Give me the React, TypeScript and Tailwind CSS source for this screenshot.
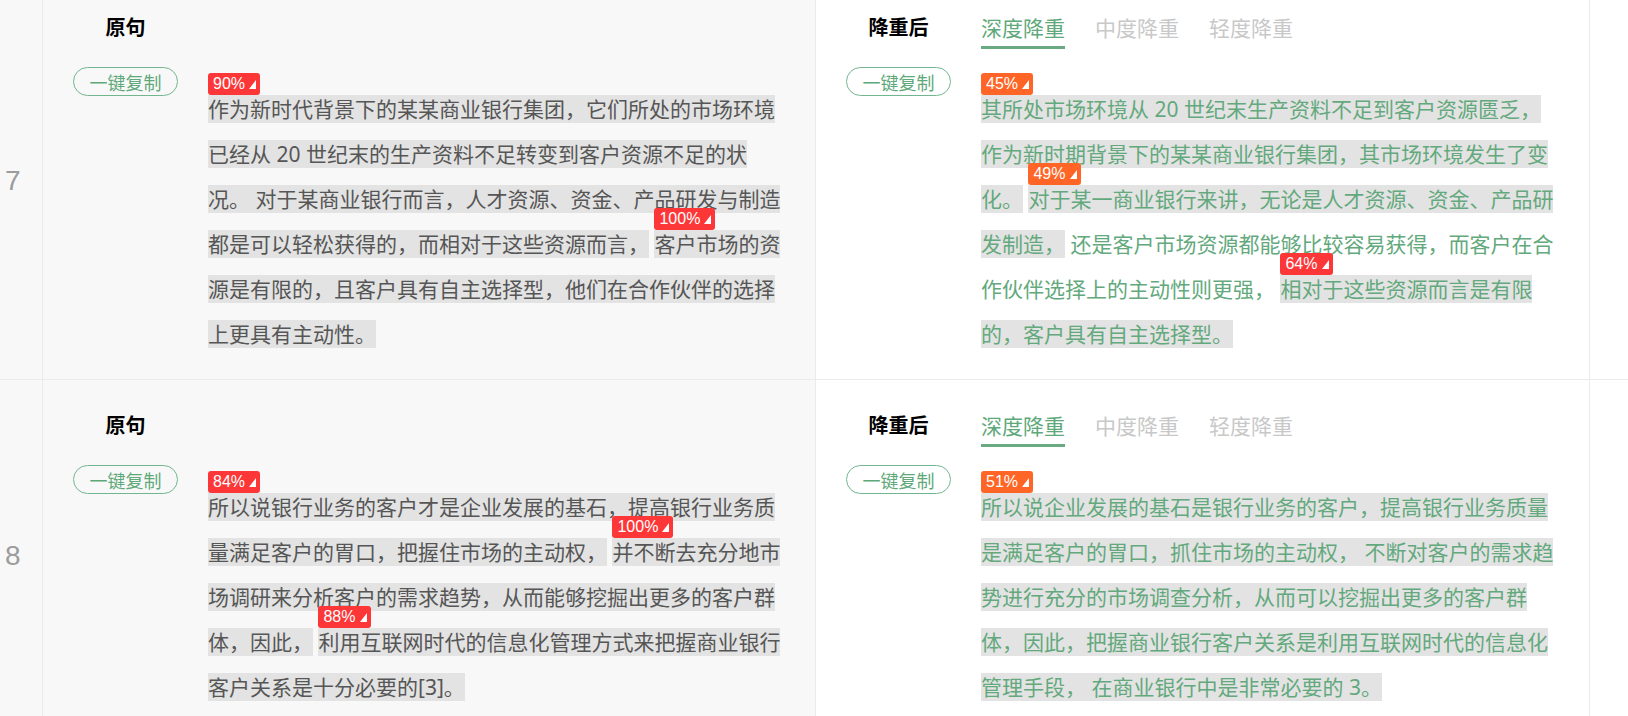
import { Fragment } from "react";

type Seg = { t: string; p?: string; c?: "red" | "orange"; plain?: boolean };

type Row = { n: number; left: Seg[]; right: Seg[] };

const rows: Row[] = [
  {
    n: 7,
    left: [
      {
        p: "90%",
        c: "red",
        t: "作为新时代背景下的某某商业银行集团，它们所处的市场环境已经从 20 世纪末的生产资料不足转变到客户资源不足的状况。 对于某商业银行而言，人才资源、资金、产品研发与制造都是可以轻松获得的，而相对于这些资源而言，",
      },
      {
        p: "100%",
        c: "red",
        t: "客户市场的资源是有限的，且客户具有自主选择型，他们在合作伙伴的选择上更具有主动性。",
      },
    ],
    right: [
      {
        p: "45%",
        c: "orange",
        t: "其所处市场环境从 20 世纪末生产资料不足到客户资源匮乏，作为新时期背景下的某某商业银行集团，其市场环境发生了变化。",
      },
      { p: "49%", c: "orange", t: "对于某一商业银行来讲，无论是人才资源、资金、产品研发制造，" },
      { plain: true, t: "还是客户市场资源都能够比较容易获得，而客户在合作伙伴选择上的主动性则更强，" },
      { p: "64%", c: "red", t: "相对于这些资源而言是有限的，客户具有自主选择型。" },
    ],
  },
  {
    n: 8,
    left: [
      {
        p: "84%",
        c: "red",
        t: "所以说银行业务的客户才是企业发展的基石，提高银行业务质量满足客户的胃口，把握住市场的主动权，",
      },
      {
        p: "100%",
        c: "red",
        t: "并不断去充分地市场调研来分析客户的需求趋势，从而能够挖掘出更多的客户群体，因此，",
      },
      { p: "88%", c: "red", t: "利用互联网时代的信息化管理方式来把握商业银行客户关系是十分必要的[3]。" },
    ],
    right: [
      {
        p: "51%",
        c: "orange",
        t: "所以说企业发展的基石是银行业务的客户，提高银行业务质量是满足客户的胃口，抓住市场的主动权， 不断对客户的需求趋势进行充分的市场调查分析，从而可以挖掘出更多的客户群体，因此，把握商业银行客户关系是利用互联网时代的信息化管理手段， 在商业银行中是非常必要的 3。",
      },
    ],
  },
];

function Badge({ p, c }: { p: string; c?: "red" | "orange" }) {
  return (
    <span
      className={`absolute left-0 top-[-22px] flex h-[22px] items-center gap-[4px] whitespace-nowrap rounded-[3px] pl-[5px] pr-[4px] font-['Liberation_Sans',sans-serif] text-[16px] leading-none text-white ${
        c === "orange" ? "bg-[#fe6526]" : "bg-[#fd3638]"
      }`}
    >
      {p}
      <svg width="7" height="9" viewBox="0 0 7 9">
        <polygon points="7,0 7,9 0,9" fill="white" />
      </svg>
    </span>
  );
}

function Text({ segs, green }: { segs: Seg[]; green?: boolean }) {
  return (
    <p
      className={`ml-[30px] mt-[20px] w-[577px] font-['Noto_Sans','Noto_Sans_CJK_SC',sans-serif] text-[21px] leading-[45px] ${
        green ? "text-[#63a97d]" : "text-[#565656]"
      }`}
    >
      {segs.map((s, i) => (
        <Fragment key={i}>
          {i > 0 && " "}
          <span className={s.plain ? "" : "relative bg-[#e3e3e3]"}>
            {s.p && <Badge p={s.p} c={s.c} />}
            {s.t}
          </span>
        </Fragment>
      ))}
    </p>
  );
}

function CopyBtn() {
  return (
    <button className="flex h-[29px] w-[105px] shrink-0 items-center justify-center rounded-full border border-[#72b690] text-[18px] leading-none text-[#5ea87a]">
      一键复制
    </button>
  );
}

export default function App() {
  return (
    <div className="h-[716px] w-full overflow-hidden bg-white font-['Noto_Sans_CJK_SC',sans-serif]">
      <div className="mt-[-18px]">
        {rows.map((r) => (
          <div key={r.n} className="flex border-b border-[#ebebeb]">
            <div className="flex w-[43px] shrink-0 items-center border-r border-[#ebebeb] bg-[#f8f8f8] pl-[5px] font-['Liberation_Sans',sans-serif] text-[28px] text-[#9c9c9c]">
              {r.n}
            </div>

            {/* 原句 */}
            <div className="w-[772px] shrink-0 bg-[#f8f8f8] pb-[22px] pl-[30px] pt-[30px]">
              <div className="flex h-[37px]">
                <div className="w-[105px] text-center text-[20px] font-bold leading-[30px] text-black">原句</div>
              </div>
              <div className="mt-[18px] flex items-start">
                <CopyBtn />
                <Text segs={r.left} />
              </div>
            </div>

            {/* 降重后 */}
            <div className="w-[775px] shrink-0 border-x border-[#ebebeb] bg-white pb-[22px] pl-[30px] pt-[30px]">
              <div className="flex h-[37px] items-start">
                <div className="w-[105px] text-center text-[20px] font-bold leading-[30px] text-black">降重后</div>
                <div className="ml-[30px] flex gap-[30px] text-[21px] leading-[30px]">
                  <div className="border-b-[3px] border-[#6aaa80] pb-[4px] text-[#5ea87a]">深度降重</div>
                  <div className="pb-[4px] text-[#c8c8c8]">中度降重</div>
                  <div className="pb-[4px] text-[#c8c8c8]">轻度降重</div>
                </div>
              </div>
              <div className="mt-[18px] flex items-start">
                <CopyBtn />
                <Text segs={r.right} green />
              </div>
            </div>

            <div className="flex-1 bg-white" />
          </div>
        ))}
      </div>
    </div>
  );
}
